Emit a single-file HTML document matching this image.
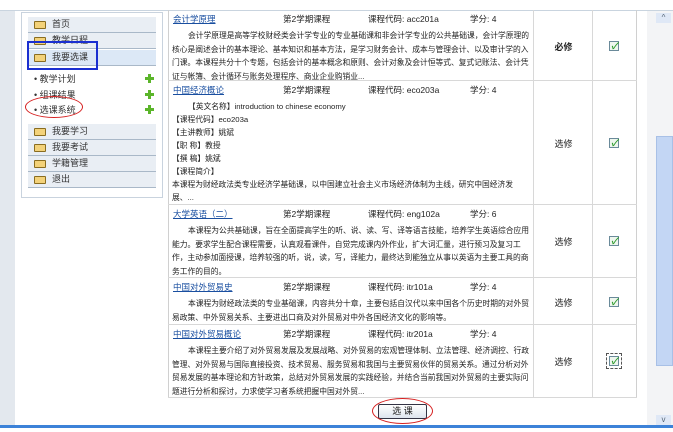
<!DOCTYPE html>
<html><head><meta charset="utf-8"><style>
*{margin:0;padding:0;box-sizing:border-box}
body{width:673px;height:432px;overflow:hidden;background:#fff;position:relative;font-family:"Liberation Sans","Noto Sans CJK SC",sans-serif;font-size:9px;color:#222}
.a{position:absolute}
.item{position:absolute;left:28px;width:128px;height:16px;background:#e9eef4;border-bottom:1px solid #a9b8c8;line-height:15px;padding-left:24px;font-size:9px;color:#333}
.fold{position:absolute;left:6px;top:4px;width:12px;height:8px;background:#f3d27a;border:1px solid #8a6d20;border-radius:1px}
.sub{position:absolute;left:34px;font-size:9px;color:#333}
.plus{position:absolute;left:145px;width:8px;height:8px}
.plus:before{content:"";position:absolute;left:3px;top:0;width:3px;height:9px;background:#5bb52a}
.plus:after{content:"";position:absolute;left:0;top:3px;width:9px;height:3px;background:#5bb52a}
.row{position:absolute;left:168px;width:469px;border-bottom:1px solid #d8d8d8}
.c1{position:absolute;left:0;top:0;width:366px;height:100%;border-right:1px solid #d8d8d8;padding:3px 1px 0 4px;overflow:hidden}
.c2{position:absolute;left:366px;top:0;width:59px;height:100%;border-right:1px solid #d8d8d8;text-align:center}
.c3{position:absolute;left:425px;width:44px;top:0;height:100%}
.hd{height:16px;position:relative;font-size:8.5px}
.hd a{color:#1a4fa0;text-decoration:underline;position:absolute;left:1px}
.hd .t{position:absolute;left:111px}
.hd .c{position:absolute;left:196px}
.hd .s{position:absolute;left:298px}
.ln{line-height:13.5px;white-space:nowrap;font-size:7.75px}
.in{padding-left:16px}
.r2 .ln{line-height:13px}
.cb{position:absolute;left:16px;width:10px;height:10px;border:1px solid #6a8a9a;background:#eef6ee}
.cb:after{content:"✓";position:absolute;left:1px;top:-3px;font-size:9px;color:#2a9a2a;font-weight:bold}
.ty{position:absolute;width:59px;left:0;text-align:center;font-size:9px}
</style></head><body>
<div class="a" style="left:0;top:10px;width:15px;height:418px;background:#e3e8ee"></div>
<div class="a" style="left:0;top:10px;width:673px;height:1px;background:#c9d4df"></div>
<div class="a" style="left:21px;top:12px;width:142px;height:186px;border:1px solid #c9d3de;background:#fff"></div>
<div class="item" style="top:17px">首页<i class="fold"></i></div>
<div class="item" style="top:33px">教学日程<i class="fold"></i></div>
<div class="item" style="top:50px;background:#dce8f6">我要选课<i class="fold"></i></div>
<div class="a" style="left:27px;top:41px;width:71px;height:29px;border:2px solid #1a2fd0"></div>
<div class="sub" style="top:72px">• 教学计划</div><div class="plus" style="top:74px"></div>
<div class="sub" style="top:88px">• 组课结果</div><div class="plus" style="top:90px"></div>
<div class="sub" style="top:103px">• 选课系统</div><div class="plus" style="top:105px"></div>
<div class="a" style="left:25px;top:96px;width:58px;height:22px;border:1.5px solid #d62020;border-radius:50%"></div>
<div class="item" style="top:124px">我要学习<i class="fold"></i></div>
<div class="item" style="top:140px">我要考试<i class="fold"></i></div>
<div class="item" style="top:156px">学籍管理<i class="fold"></i></div>
<div class="item" style="top:172px">退出<i class="fold"></i></div>

<div class="a" style="left:168px;top:10px;width:1px;height:388px;background:#d0d0d0"></div>
<div class="a" style="left:636px;top:10px;width:1px;height:388px;background:#d0d0d0"></div>

<div class="row" style="top:10px;height:71px"><div class="c1">
<div class="hd"><a>会计学原理</a><span class="t">第2学期课程</span><span class="c">课程代码: acc201a</span><span class="s">学分: 4</span></div>
<div class="ln in">会计学原理是高等学校财经类会计学专业的专业基础课和非会计学专业的公共基础课，会计学原理的</div>
<div class="ln">核心是阐述会计的基本理论、基本知识和基本方法，是学习财务会计、成本与管理会计、以及审计学的入</div>
<div class="ln">门课。本课程共分十个专题，包括会计的基本概念和原则、会计对象及会计恒等式、复式记账法、会计凭</div>
<div class="ln">证与帐簿、会计循环与账务处理程序、商业企业购销业...</div>
</div><div class="c2"><b class="ty" style="top:30px">必修</b></div><div class="c3"><i class="cb" style="top:31px"></i></div></div>

<div class="row r2" style="top:81px;height:124px"><div class="c1">
<div class="hd"><a>中国经济概论</a><span class="t">第2学期课程</span><span class="c">课程代码: eco203a</span><span class="s">学分: 4</span></div>
<div class="ln in">【英文名称】introduction to chinese economy</div>
<div class="ln">【课程代码】eco203a</div>
<div class="ln">【主讲教师】姚斌</div>
<div class="ln">【职 称】教授</div>
<div class="ln">【撰 稿】姚斌</div>
<div class="ln">【课程简介】</div>
<div class="ln">本课程为财经政法类专业经济学基础课，以中国建立社会主义市场经济体制为主线，研究中国经济发</div>
<div class="ln">展、...</div>
</div><div class="c2"><span class="ty" style="top:56px">选修</span></div><div class="c3"><i class="cb" style="top:57px"></i></div></div>

<div class="row" style="top:205px;height:73px"><div class="c1">
<div class="hd"><a>大学英语（二）</a><span class="t">第2学期课程</span><span class="c">课程代码: eng102a</span><span class="s">学分: 6</span></div>
<div class="ln in">本课程为公共基础课，旨在全面提高学生的听、说、读、写、译等语言技能，培养学生英语综合应用</div>
<div class="ln">能力。要求学生配合课程需要，认真观看课件，自觉完成课内外作业，扩大词汇量，进行预习及复习工</div>
<div class="ln">作，主动参加面授课，培养较强的听，说，读，写，译能力，最终达到能独立从事以英语为主要工具的商</div>
<div class="ln">务工作的目的。</div>
</div><div class="c2"><span class="ty" style="top:30px">选修</span></div><div class="c3"><i class="cb" style="top:31px"></i></div></div>

<div class="row" style="top:278px;height:47px"><div class="c1">
<div class="hd"><a>中国对外贸易史</a><span class="t">第2学期课程</span><span class="c">课程代码: itr101a</span><span class="s">学分: 4</span></div>
<div class="ln in">本课程为财经政法类的专业基础课，内容共分十章，主要包括自汉代以来中国各个历史时期的对外贸</div>
<div class="ln">易政策、中外贸易关系、主要进出口商及对外贸易对中外各国经济文化的影响等。</div>
</div><div class="c2"><span class="ty" style="top:18px">选修</span></div><div class="c3"><i class="cb" style="top:19px"></i></div></div>

<div class="row" style="top:325px;height:73px"><div class="c1">
<div class="hd"><a>中国对外贸易概论</a><span class="t">第2学期课程</span><span class="c">课程代码: itr201a</span><span class="s">学分: 4</span></div>
<div class="ln in">本课程主要介绍了对外贸易发展及发展战略、对外贸易的宏观管理体制、立法管理、经济调控、行政</div>
<div class="ln">管理、对外贸易与国际直接投资、技术贸易、服务贸易和我国与主要贸易伙伴的贸易关系。通过分析对外</div>
<div class="ln">贸易发展的基本理论和方针政策，总结对外贸易发展的实践经验，并结合当前我国对外贸易的主要实际问</div>
<div class="ln">题进行分析和探讨，力求使学习者系统把握中国对外贸...</div>
</div><div class="c2"><span class="ty" style="top:30px">选修</span></div><div class="c3"><i class="cb" style="top:31px;outline:1px dashed #555;outline-offset:2px"></i></div></div>

<div class="a" style="left:378px;top:404px;width:49px;height:15px;border:1px solid #334;border-radius:2px;background:linear-gradient(#fff,#dde4ee);text-align:center;line-height:13px;font-size:9px">选 课</div>
<div class="a" style="left:372px;top:398px;width:61px;height:26px;border:1.5px solid #d62020;border-radius:50%"></div>

<div class="a" style="left:647px;top:11px;width:26px;height:415px;background:#f3f4f6"></div>
<div class="a" style="left:656px;top:13px;width:15px;height:10px;background:#dfe8f6;color:#567;font-size:8px;text-align:center;line-height:10px">^</div>
<div class="a" style="left:656px;top:136px;width:17px;height:230px;background:#c3d6f4;border:1px solid #a8c0e6"></div>
<div class="a" style="left:656px;top:415px;width:15px;height:10px;background:#dfe8f6;color:#567;font-size:8px;text-align:center;line-height:10px">v</div>
<div class="a" style="left:0;top:425px;width:673px;height:3px;background:#3c82d8"></div>
</body></html>
